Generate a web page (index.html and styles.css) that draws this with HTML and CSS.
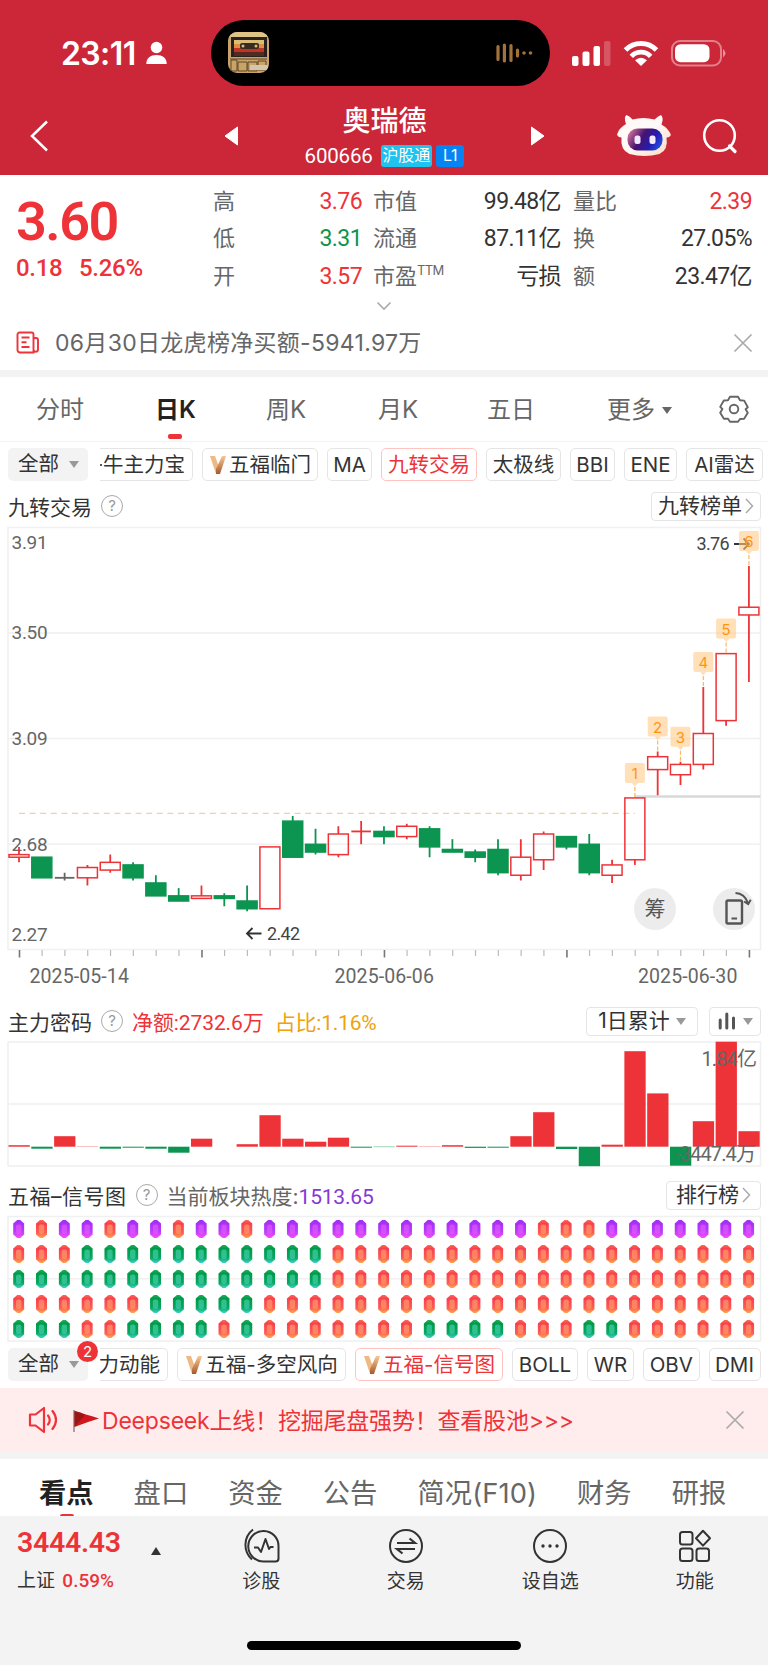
FILE: index.html
```
<!DOCTYPE html>
<html lang="zh-CN">
<head>
    <meta charset="UTF-8">
    <meta name="viewport" content="width=device-width, initial-scale=1.0">
    <title>奥瑞德 600666</title>
    <link rel="stylesheet" href="styles.css">
</head>
<body>

    <!-- 顶部 -->
    <header class="top">
        <div class="status-bar">
            <div class="clock">23:11</div>
            <svg class="person" width="22" height="24" viewBox="0 0 22 24"><circle cx="10.500" cy="6.500" r="5.800" fill="#fff"/><path d="M.3 23C.3 17 4.500 14 10.500 14s10.200 3 10.200 9z" fill="#fff"/></svg>
            <div class="island">
                <svg width="42" height="42" viewBox="0 0 42 42">
                    <defs><clipPath id="album"><rect width="41" height="41" rx="9"/></clipPath></defs>
                    <g clip-path="url(#album)">
                        <rect width="42" height="42" fill="#c9a468"/>
                        <rect width="42" height="5" fill="#e0c486"/>
                        <rect x="3" y="5" width="36" height="20" fill="#28211f"/>
                        <rect x="6" y="8" width="30" height="5" fill="#d9bd77"/>
                        <rect x="6" y="12" width="30" height="4" fill="#e18b45"/>
                        <rect x="6" y="16" width="30" height="4" fill="#bf3524"/>
                        <rect x="6" y="20" width="30" height="4" fill="#532a22"/>
                        <rect x="12" y="11" width="19" height="6" rx="2" fill="#392a23"/>
                        <circle cx="15" cy="14" r="1.500" fill="#d9bd77"/><circle cx="28" cy="14" r="1.500" fill="#d9bd77"/>
                        <path d="M2 27h37M3 28v11h6V28zM10 30h9v9h-9zM20 30h9v9h-9zM30 29h8v9h-8z" fill="none" stroke="#5f4728" stroke-width="1"/>
                        <rect x="22" y="33" width="18" height="5" fill="#d4c6ae"/>
                    </g>
                </svg>
                <svg width="37" height="20" viewBox="0 0 37 20"><path d="M2 3.500v13M8.400 2v16M15 2.500v15" stroke="#a2713c" stroke-width="3.200" stroke-linecap="round"/><path d="M21.500 7v6" stroke="#a2713c" stroke-width="3.200" stroke-linecap="round"/><circle cx="28" cy="10" r="1.800" fill="#a2713c"/><circle cx="34.500" cy="10" r="1.800" fill="#a2713c"/></svg>
            </div>
            <svg class="signal" width="39" height="25" viewBox="0 0 39 25"><rect y="15" width="6.500" height="10" rx="2" fill="#fff"/><rect x="10.500" y="10.500" width="7" height="14.500" rx="2" fill="#fff"/><rect x="21.500" y="5" width="6.500" height="20" rx="2" fill="#fff"/><rect x="32" width="6.500" height="25" rx="2" fill="#fff" opacity=".22"/></svg>
            <svg class="wifi" width="36" height="26" viewBox="0 0 36 26"><path d="M2.500 10a21.500 21.500 0 0 1 31 0" fill="none" stroke="#fff" stroke-width="5"/><path d="M8.300 16.300a13.500 13.500 0 0 1 19.400 0" fill="none" stroke="#fff" stroke-width="4.800"/><path d="M12 20.200q6-5 12 0l-6 5.800z" fill="#fff"/></svg>
            <svg class="battery" width="56" height="27" viewBox="0 0 56 27"><rect x="1" y="1" width="49" height="24.500" rx="8" fill="none" stroke="#fff" stroke-opacity=".42" stroke-width="2"/><rect x="4" y="4.200" width="34.500" height="18" rx="5.500" fill="#fff"/><path d="M52 9q5 4.300 0 8.600z" fill="#fff" opacity=".5"/></svg>
        </div>
        <div class="nav-bar">
            <svg class="back" width="20" height="32" viewBox="0 0 20 32"><path d="M17 1.500L2 16l15 14.500" fill="none" stroke="#fff" stroke-width="2.500"/></svg>
            <svg class="prev" width="15" height="20" viewBox="0 0 15 20"><path d="M1 10L13.500 1v18z" fill="#fff" stroke="#fff" stroke-linejoin="round"/></svg>
            <div class="stock">
                <h1>奥瑞德</h1>
                <div class="code"><span class="num">600666</span><b class="tag">沪股通</b><b class="tag blue">L1</b></div>
            </div>
            <svg class="next" width="15" height="20" viewBox="0 0 15 20"><path d="M14 10L1.500 1v18z" fill="#fff" stroke="#fff" stroke-linejoin="round"/></svg>
            <svg class="robot" width="56" height="44" viewBox="0 0 56 44">
                <defs>
                    <linearGradient id="face" x1="0" x2="1" y1=".2" y2=".6"><stop offset="0" stop-color="#d87599"/><stop offset=".42" stop-color="#461371"/><stop offset=".75" stop-color="#241cae"/><stop offset="1" stop-color="#214be4"/></linearGradient>
                    <linearGradient id="head" x1="0" x2="1" y1="0" y2="1"><stop offset=".5" stop-color="#fff9f7"/><stop offset="1" stop-color="#fbd9bf"/></linearGradient>
                </defs>
                <path d="M10 10Q7.500 3 10.500 1q3.500 1 6 4.500 11-3 22 0Q42 2 45 1q3 3 .5 9.500 7 4 9.500 10.500-2 3-4.500 2.500 2 12.500-7 16.500-15 4-30 0Q4 36 5.500 23.500q-3.500 0-4.500-3Q3 14 10 10z" fill="url(#head)"/>
                <rect x="11.500" y="14.500" width="35" height="22" rx="10" fill="url(#face)"/>
                <rect x="18.500" y="21.500" width="6" height="8.500" rx="2.500" fill="#f1eaff"/><rect x="33.500" y="21.500" width="6" height="8.500" rx="2.500" fill="#f1eaff"/>
            </svg>
            <svg class="search" width="36" height="36" viewBox="0 0 36 36"><circle cx="17.500" cy="17.500" r="15.300" fill="none" stroke="#fff" stroke-width="2.600"/><path d="M27.500 28l5.500 5.500" stroke="#fff" stroke-width="3.200" stroke-linecap="round"/></svg>
        </div>
    </header>

    <!-- 行情 -->
    <section class="quote">
        <div class="price">
            <div class="last num">3.60</div>
            <div class="change num"><span>0.18</span><span>5.26%</span></div>
        </div>
        <dl class="stat">
            <div><dt>高</dt><dd class="red">3.76</dd></div>
            <div><dt>低</dt><dd class="green">3.31</dd></div>
            <div><dt>开</dt><dd class="red">3.57</dd></div>
        </dl>
        <dl class="stat wide">
            <div><dt>市值</dt><dd>99.48亿</dd></div>
            <div><dt>流通</dt><dd>87.11亿</dd></div>
            <div><dt>市盈<sup>TTM</sup></dt><dd>亏损</dd></div>
        </dl>
        <dl class="stat last-col">
            <div><dt>量比</dt><dd class="red">2.39</dd></div>
            <div><dt>换</dt><dd>27.05%</dd></div>
            <div><dt>额</dt><dd>23.47亿</dd></div>
        </dl>
    </section>
    <div class="expand"><svg width="16" height="10" viewBox="0 0 16 10"><path d="M1.500 1.500L8 8l6.500-6.500" fill="none" stroke="#aaa" stroke-width="1.600"/></svg></div>

    <!-- 资讯 -->
    <div class="news">
        <svg width="24" height="23" viewBox="0 0 24 23"><path d="M17.500 21.500H4a2.500 2.500 0 0 1-2.500-2.500V3.500A2 2 0 0 1 3.500 1.500h12a2 2 0 0 1 2 2zM17.500 7h2.500a2 2 0 0 1 2 2v10a2.300 2.300 0 0 1-4.500 0M5.500 6.500h8M5.500 11.300h5M5.500 16h8" fill="none" stroke="#f0323a" stroke-width="1.900"/></svg>
        <span>06月30日龙虎榜净买额-5941.97万</span>
        <svg class="close" width="20" height="20" viewBox="0 0 20 20"><path d="M1.500 1.500l17 17M18.500 1.500l-17 17" stroke="#aaa" stroke-width="1.700"/></svg>
    </div>

    <!-- 周期 -->
    <nav class="period">
        <a class="p1">分时</a>
        <a class="p2 active">日K</a>
        <a class="p3">周K</a>
        <a class="p4">月K</a>
        <a class="p5">五日</a>
        <a class="p6">更多<i class="tri"></i></a>
        <svg width="30" height="28" viewBox="0 0 30 28"><path d="M11 1.700h8l2 3.600 4.200.3 3.600 6.600-2.200 2 2.200 3.600-3.700 6-4.100.2-2 2.700h-8l-2-2.900-4.100-.1-3.700-6L3.400 14l-2.200-2.100 3.600-6.400L9 5.300z" fill="none" stroke="#666" stroke-width="1.900" stroke-linejoin="round"/><circle cx="15" cy="14" r="4.300" fill="none" stroke="#666" stroke-width="1.900"/></svg>
    </nav>

    <!-- 主图指标 -->
    <div class="chips main-chips">
        <span class="all">全部<i class="tri"></i></span>
        <span class="chip cut w1"><em>牛主力宝</em></span>
        <span class="chip w2"><svg class="vip" width="18" height="20"><use href="#vip"/></svg>五福临门</span>
        <span class="chip w3">MA</span>
        <span class="chip on w4">九转交易</span>
        <span class="chip w5">太极线</span>
        <span class="chip w6">BBI</span>
        <span class="chip w7">ENE</span>
        <span class="chip w8">AI雷达</span>
    </div>

    <div class="panel-title first">
        <span>九转交易</span><i class="help">?</i>
        <span class="btn rank">九转榜单<svg width="9" height="16" viewBox="0 0 9 16"><path d="M1 1l6.500 7L1 15" fill="none" stroke="#aaa" stroke-width="1.500"/></svg></span>
    </div>

    <!-- K线图 -->
    <div class="kline">
        <svg id="kline" width="768" height="470" viewBox="0 5 768 470"></svg>
        <div class="round chou">筹</div>
        <div class="round rotate"><svg width="42" height="42" viewBox="0 0 42 42"><rect x="13.500" y="12.500" width="15.500" height="23" rx="1.500" fill="none" stroke="#555" stroke-width="2.400"/><path d="M18.500 30.500h5.500" stroke="#555" stroke-width="2"/><path d="M22.500 5q9 .5 12.500 10M31 13.500l4.200 2.700 2.500-4.500" fill="none" stroke="#555" stroke-width="2"/></svg></div>
    </div>

    <!-- 主力密码 -->
    <div class="panel-title second">
        <span>主力密码</span><i class="help">?</i>
        <span class="net">净额:2732.6万</span><span class="ratio">占比:1.16%</span>
        <span class="btn days">1日累计<i class="tri"></i></span>
        <span class="btn bars"><svg width="18" height="18" viewBox="0 0 18 18"><path d="M2.200 8v8M8.800 2v14M15.500 6v10" stroke="#555" stroke-width="3" stroke-linecap="round"/></svg><i class="tri"></i></span>
    </div>
    <svg id="flow" width="768" height="130" viewBox="0 0 768 130"></svg>

    <!-- 五福信号图 -->
    <div class="panel-title third">
        <span class="name">五福–信号图</span><i class="help">?</i>
        <span class="heat">当前板块热度:<b>1513.65</b></span>
        <span class="btn rank2">排行榜<svg width="9" height="16" viewBox="0 0 9 16"><path d="M1 1l6.500 7L1 15" fill="none" stroke="#aaa" stroke-width="1.500"/></svg></span>
    </div>
    <svg id="gems" width="768" height="130" viewBox="0 0 768 130">
        <defs>
            <linearGradient id="vg" x1="0" x2="0" y1="0" y2="1"><stop offset="0" stop-color="#f6c896"/><stop offset="1" stop-color="#a9592a"/></linearGradient>
            <linearGradient id="pg" x1="0" x2="0" y1="0" y2="1"><stop offset="0" stop-color="#a42bf5"/><stop offset=".6" stop-color="#b53cf8"/><stop offset="1" stop-color="#f94dfb"/></linearGradient>
            <linearGradient id="og" x1="0" x2="0" y1="0" y2="1"><stop offset="0" stop-color="#fb6a4e"/><stop offset=".2" stop-color="#f9404f"/><stop offset=".7" stop-color="#fb5b52"/><stop offset="1" stop-color="#ffa64d"/></linearGradient>
            <linearGradient id="gg" x1="0" x2="0" y1="0" y2="1"><stop offset="0" stop-color="#1fae5c"/><stop offset=".2" stop-color="#009a48"/><stop offset=".7" stop-color="#06a65d"/><stop offset="1" stop-color="#3fd3c9"/></linearGradient>
            <symbol id="vip" viewBox="0 0 18 20"><path d="M1 1h5l4 11-3 7z" fill="#eeb985"/><path d="M17 1h-4L7 14v5h4z" fill="url(#vg)"/></symbol>
            <symbol id="gem-p" viewBox="0 0 12 18"><path d="M4.500 0h3l4 3.500v11L7.500 18h-3l-4-3.500v-11z" fill="url(#pg)"/><rect x="3.300" y="4.500" width="5.400" height="9.500" rx="2" fill="#e95bfb" opacity=".6"/></symbol>
            <symbol id="gem-o" viewBox="0 0 12 18"><path d="M4.500 0h3l4 3.500v11L7.500 18h-3l-4-3.500v-11z" fill="url(#og)"/><rect x="3.300" y="4.500" width="5.400" height="9.500" rx="2" fill="#ff946b" opacity=".75"/></symbol>
            <symbol id="gem-g" viewBox="0 0 12 18"><path d="M4.500 0h3l4 3.500v11L7.500 18h-3l-4-3.500v-11z" fill="url(#gg)"/><rect x="3.300" y="4.500" width="5.400" height="9.500" rx="2" fill="#3fcba5" opacity=".75"/></symbol>
        </defs>
    </svg>

    <!-- 副图指标 -->
    <div class="chips sub-chips">
        <span class="all">全部<i class="tri"></i><b class="badge">2</b></span>
        <span class="chip cut s1"><em>力动能</em></span>
        <span class="chip s2"><svg class="vip" width="18" height="20"><use href="#vip"/></svg>五福-多空风向</span>
        <span class="chip on s3"><svg class="vip" width="18" height="20"><use href="#vip"/></svg>五福-信号图</span>
        <span class="chip s4">BOLL</span>
        <span class="chip s5">WR</span>
        <span class="chip s6">OBV</span>
        <span class="chip s7">DMI</span>
    </div>

    <!-- 公告条 -->
    <div class="notice">
        <svg width="32" height="28" viewBox="0 0 32 28"><path d="M2 8.500h5.500L16 2v24l-8.500-6.500H2z" fill="none" stroke="#f0323a" stroke-width="2.200" stroke-linejoin="round"/><path d="M20 9.500q3.500 4.500 0 9M24.500 5q7 9 0 18" fill="none" stroke="#f0323a" stroke-width="2.200" stroke-linecap="round"/></svg>
        <svg class="flag" width="27" height="24" viewBox="0 0 27 24"><path d="M1 1v22" stroke="#888" stroke-width="1.500"/><path d="M1.500 2Q12 5 26 9.500 14 13 1.500 18z" fill="#d0171b"/><path d="M1.500 2Q7 3 12 6L1.500 18z" fill="#98181a"/></svg>
        <span>Deepseek上线！挖掘尾盘强势！查看股池&gt;&gt;&gt;</span>
        <svg class="close" width="20" height="20" viewBox="0 0 20 20"><path d="M1.500 1.500l17 17M18.500 1.500l-17 17" stroke="#aaa" stroke-width="1.700"/></svg>
    </div>

    <nav class="info-tabs">
        <a class="active">看点</a><a>盘口</a><a>资金</a><a>公告</a><a class="f10">简况(F10)</a><a>财务</a><a>研报</a>
    </nav>

    <!-- 底部 -->
    <footer class="bottom">
        <div class="index">
            <div class="point num">3444.43</div>
            <div class="sh">上证 <b>0.59%</b></div>
        </div>
        <i class="up"></i>
        <div class="tool">
            <svg width="38" height="36" viewBox="0 0 38 36"><path d="M22 3a15 15 0 0 1 14.500 15v12.500a3 3 0 0 1-3 3H21.500A15.200 15.200 0 0 1 21.500 3zM11 1.500A19.500 19.500 0 0 0 10 31.500" fill="none" stroke="#333" stroke-width="2"/><path d="M12 19.500h4l3 4.500 4.500-13 3.500 10 1.500-2h3" fill="none" stroke="#333" stroke-width="2" stroke-linejoin="round"/></svg>
            <span>诊股</span>
        </div>
        <div class="tool">
            <svg width="36" height="36" viewBox="0 0 36 36"><circle cx="18" cy="18" r="16" fill="none" stroke="#333" stroke-width="2"/><path d="M9 15h18l-5.500-4.500M27 21H9l5.500 4.500" fill="none" stroke="#333" stroke-width="2.200"/></svg>
            <span>交易</span>
        </div>
        <div class="tool">
            <svg width="36" height="36" viewBox="0 0 36 36"><circle cx="18" cy="18" r="16" fill="none" stroke="#333" stroke-width="2"/><circle cx="11" cy="18" r="1.700" fill="#333"/><circle cx="18" cy="18" r="1.700" fill="#333"/><circle cx="25" cy="18" r="1.700" fill="#333"/></svg>
            <span>设自选</span>
        </div>
        <div class="tool">
            <svg width="34" height="36" viewBox="0 0 34 36"><g fill="none" stroke="#333" stroke-width="2"><rect x="2" y="4" width="12.500" height="12.500" rx="2.500"/><rect x="2" y="20.500" width="12.500" height="12.500" rx="2.500"/><rect x="18.500" y="20.500" width="12.500" height="12.500" rx="2.500"/><path d="M25 2.800l7 7.400-7 7.400-7-7.400z" stroke-linejoin="round"/></g></svg>
            <span>功能</span>
        </div>
        <div class="home"></div>
    </footer>

    <script>
        const RED = '#ee3338';
        const GREEN = '#0b9550';
        const STEP = 22.81;
        const cx = i => 19 + i * STEP;

        // K线数据：最高, 实体上沿, 实体下沿, 最低, 颜色
        const candles = [
            [2.67, 2.64, 2.63, 2.61, 'r'], [2.63, 2.63, 2.55, 2.55, 'g'], [2.57, 2.55, 2.55, 2.54, 'x'],
            [2.60, 2.59, 2.55, 2.52, 'r'], [2.64, 2.61, 2.58, 2.57, 'r'], [2.61, 2.60, 2.55, 2.54, 'g'],
            [2.56, 2.53, 2.48, 2.48, 'g'], [2.51, 2.48, 2.46, 2.46, 'g'], [2.52, 2.48, 2.47, 2.47, 'r'],
            [2.49, 2.48, 2.47, 2.44, 'g'], [2.52, 2.46, 2.43, 2.42, 'g'], [2.67, 2.67, 2.43, 2.43, 'r'],
            [2.79, 2.77, 2.63, 2.63, 'g'], [2.74, 2.68, 2.65, 2.64, 'g'], [2.75, 2.72, 2.64, 2.63, 'r'],
            [2.77, 2.73, 2.73, 2.68, 'r'], [2.75, 2.73, 2.71, 2.68, 'g'], [2.76, 2.75, 2.71, 2.70, 'r'],
            [2.75, 2.74, 2.67, 2.63, 'g'], [2.70, 2.66, 2.65, 2.65, 'g'], [2.66, 2.65, 2.63, 2.61, 'g'],
            [2.70, 2.66, 2.57, 2.56, 'g'], [2.70, 2.63, 2.56, 2.54, 'r'], [2.73, 2.72, 2.62, 2.58, 'r'],
            [2.71, 2.71, 2.67, 2.66, 'g'], [2.72, 2.68, 2.57, 2.56, 'g'], [2.62, 2.60, 2.56, 2.53, 'r'],
            [2.86, 2.86, 2.62, 2.60, 'r'], [3.04, 3.02, 2.97, 2.87, 'r'], [3.00, 2.99, 2.95, 2.91, 'r'],
            [3.29, 3.11, 2.99, 2.97, 'r'], [3.42, 3.42, 3.16, 3.14, 'r'], [3.76, 3.60, 3.57, 3.31, 'r']
        ];
        const y = p => 113 + (3.5 - p) * 257.7;
        let k = '<path d="M8 7.500h752.500v422H8zM8 113h752M8 218.500h752M8 324.300h752" fill="none" stroke="#f0f0f0" stroke-width="1.500"/>';
        k += '<path d="M19 293.400h616" stroke="#fbcf8e" stroke-width="1.300" stroke-dasharray="6 4.600"/>';
        k += '<path d="M635 276.500h125.500" stroke="#d9d9d9" stroke-width="2.500"/>';
        k += '<g class="axis"><text x="11.500" y="28.500">3.91</text><text x="11.500" y="119">3.50</text><text x="11.500" y="224.500">3.09</text><text x="11.500" y="330.500">2.68</text><text x="11.500" y="421">2.27</text>';
        k += '<text class="date" x="29.500" y="463">2025-05-14</text><text class="date" x="334.500" y="463">2025-06-06</text><text class="date" x="638" y="463">2025-06-30</text></g>';
        k += '<g class="mark"><text x="267" y="419.500">2.42</text><text x="696.500" y="30">3.76</text></g>';
        k += '<path d="M261.500 413.500H247M252.500 408l-5.500 5.500 5.500 5.500M734 24h15M743.500 18.500l5.500 5.500-5.500 5.500" fill="none" stroke="#333" stroke-width="1.800"/>';
        candles.forEach(([hi, top, bot, lo, type], i) => {
            const x = cx(i);
            const color = type === 'r' ? RED : type === 'g' ? GREEN : '#666';
            k += `<path d="M${x} ${y(hi)}V${y(top)}M${x} ${y(bot)}V${y(lo)}" stroke="${color}" stroke-width="1.800"/>`;
            if (top === bot) {
                k += `<path d="M${x - 9.800} ${y(top)}h19.600" stroke="${color}" stroke-width="1.800"/>`;
            } else {
                k += `<rect x="${x - 10}" y="${y(top)}" width="20" height="${y(bot) - y(top)}" fill="${type === 'g' ? GREEN : 'none'}" stroke="${color}" stroke-width="1.500"/>`;
            }
            // 大小刻度
            k += i % 8 === 0 ? `<path d="M${x + .5} 430v7.500" stroke="#777" stroke-width="1.600"/>` : `<path d="M${x + .3} 430v6" stroke="#bbb" stroke-width="1.200"/>`;
            // 九转序号
            if (i > 26) {
                const t = y(hi) - 35;
                k += `<path d="M${x} ${t + 24}V${y(hi)}" stroke="#f8b95d" stroke-width="1.200" stroke-dasharray="4 2"/>`;
                k += `<path d="M${x - 8} ${t}h16a2 2 0 0 1 2 2v16a2 2 0 0 1-2 2h-5l-3 3.500-3-3.500h-5a2 2 0 0 1-2-2v-16a2 2 0 0 1 2-2z" fill="#ffcb88" fill-opacity=".6"/>`;
                k += `<text class="nine" x="${x}" y="${t + 16}">${i - 26}</text>`;
            }
        });
        document.getElementById('kline').innerHTML = k;

        // 主力资金柱
        const flow = [1.5, -2, 10.5, .3, -2, -1, -2, -6, 8, 0, 2.5, 31.5, 8, 5, 9, -1, -.4, 1, .3, 1.5, -1.2, -1, 10.5, 34.5, -2.3, -19.5, 2, 95.5, 53.3, -19, 25.5, 105, 15.5];
        let f = '<path d="M8 2h752.500v124H8zM8 64h752" fill="none" stroke="#f0f0f0" stroke-width="1.500"/>';
        flow.forEach((v, i) => {
            f += `<rect x="${cx(i) - 10.500}" y="${v > 0 ? 106.700 - v : 106.700}" width="21.300" height="${Math.abs(v)}" fill="${v > 0 ? RED : GREEN}"/>`;
        });
        f += '<text x="756" y="26" text-anchor="end">1.84亿</text><text x="755" y="121" text-anchor="end">-3447.4万</text>';
        document.getElementById('flow').innerHTML = f;

        // 信号图：p 紫, o 橙, g 绿
        const rows = [
            'poppoppoppoppppppppppppooopppppppp'.slice(0, 33),
            'oooggggggggggg' + 'o'.repeat(19),
            'gggggggggggggg' + 'o'.repeat(19),
            'ooooooggggg' + 'o'.repeat(22),
            'gggooggggogooooooogggg' + 'oooggoooooo'
        ];
        let g = '<path d="M8 1.500h752.500v124.500H8zM8 63.700h752" fill="none" stroke="#f0f0f0" stroke-width="1.500"/>';
        rows.forEach((row, r) => {
            [...row].forEach((c, i) => {
                g += `<use href="#gem-${c}" x="${cx(i) - 6.300}" y="${5 + r * 25}" width="12" height="18"/>`;
            });
        });
        document.getElementById('gems').insertAdjacentHTML('beforeend', g);
    </script>

</body>
</html>
```

FILE: styles.css
```
/* 基础 */
* {
    box-sizing: border-box;
}
body {
    margin: 0;
    width: 768px;
    height: 1665px;
    overflow: hidden;
    background: #fff;
    color: #333;
    font-family: Inter, "Noto Sans CJK SC", sans-serif;
    display: flex;
    flex-direction: column;
}
body > * {
    flex-shrink: 0;
}
svg {
    display: block;
    flex-shrink: 0;
}
i, em {
    font-style: normal;
}
.num {
    font-family: Roboto, "Noto Sans CJK SC", sans-serif;
}
.red {
    color: #ee3338;
}
.green {
    color: #0b9550;
}

/* 顶部 */
.top {
    height: 175px;
    background: #cb2738;
    color: #fff;
}
.status-bar {
    display: flex;
    align-items: center;
    height: 106px;
    padding-left: 61px;
}
.clock {
    width: 85px;
    font-size: 32px;
    font-weight: 600;
    letter-spacing: -.6px;
    white-space: nowrap;
}
.island {
    display: flex;
    align-items: center;
    justify-content: space-between;
    width: 339px;
    height: 66px;
    margin-left: 43px;
    padding: 0 17px;
    border-radius: 33px;
    background: #000;
}
.signal {
    margin-left: 22px;
}
.wifi {
    margin-left: 12px;
}
.battery {
    margin-left: 12px;
}
.nav-bar {
    display: flex;
    align-items: center;
    height: 60px;
    padding-left: 30px;
}
.prev {
    margin-left: 174px;
}
.stock {
    width: 291px;
    text-align: center;
}
.stock h1 {
    margin: 0;
    font-size: 28px;
    font-weight: 500;
    line-height: 30px;
    padding-bottom: 7px;
}
.code {
    display: flex;
    align-items: center;
    justify-content: center;
    height: 24px;
    font-size: 20.500px;
    letter-spacing: -.2px;
    padding-top: 2px;
}
.tag {
    height: 22px;
    margin-left: 8px;
    padding: 0 2px;
    border-radius: 3px;
    background: #1fc3ee;
    font-size: 16px;
    font-weight: 400;
    line-height: 21px;
}
.tag.blue {
    margin-left: 4px;
    padding: 0 7px;
    background: #0584f2;
}
.robot {
    margin-left: 71px;
}
.search {
    margin-left: 30px;
}

/* 行情 */
.quote {
    display: flex;
    height: 119px;
    padding: 8px 0 0 16px;
}
.price {
    width: 197px;
    color: #ee3338;
    font-weight: 700;
}
.last {
    padding-top: 10px;
    font-size: 54px;
    font-weight: 600;
    line-height: 57px;
    letter-spacing: -1.500px;
}
.change {
    padding-top: 4px;
    font-size: 24px;
    font-weight: 500;
    line-height: 28px;
    letter-spacing: -.3px;
}
.change span {
    display: inline-block;
    width: 63px;
}
.stat {
    width: 149px;
    margin: 0;
    font-size: 22px;
}
.stat.wide {
    width: 188px;
    margin-left: 11px;
}
.stat.last-col {
    width: 179px;
    margin-left: 12px;
}
.stat div {
    display: flex;
    justify-content: space-between;
    height: 37.400px;
    line-height: 37px;
}
.stat dt {
    color: #666;
    white-space: nowrap;
}
.stat dd {
    margin: 0;
    font-family: Roboto, "Noto Sans CJK SC", sans-serif;
    font-size: 23px;
    letter-spacing: -.6px;
    white-space: nowrap;
}
sup {
    font-size: 13px;
    letter-spacing: -.7px;
    line-height: 1;
    vertical-align: 9px;
}
.expand {
    display: flex;
    justify-content: center;
    height: 24px;
    padding-top: 7px;
}

/* 资讯 */
.news {
    display: flex;
    align-items: center;
    height: 52px;
    padding: 0 15px 3px 16px;
    color: #666;
    font-size: 23px;
}
.news span {
    margin: -4px 0 0 15px;
    letter-spacing: .3px;
}
.close {
    margin-left: auto;
}

/* 周期 */
.period {
    display: flex;
    height: 72px;
    border-top: 7px solid #f3f3f3;
    border-bottom: 1px solid #f3f3f3;
    padding-left: 36px;
    font-size: 24px;
    line-height: 66px;
    color: #666;
}
.p1 { width: 119px; }
.p2 { width: 111px; }
.p3 { width: 112px; }
.p4 { width: 109px; }
.p5 { width: 120px; }
.p6 { width: 112px; }
.period a {
    position: relative;
}
.period svg {
    margin-top: 18px;
}
.period .active {
    color: #222;
    font-weight: 600;
}
.period .active::after {
    content: "";
    position: absolute;
    left: 13px;
    bottom: 2px;
    width: 14px;
    height: 5px;
    border-radius: 2px;
    background: #ee3338;
}
.tri {
    display: inline-block;
    border: 5px solid transparent;
    border-top: 7px solid #999;
    border-bottom: 0;
}
.p6 .tri {
    margin: 0 0 4px 7px;
    border-top-color: #666;
}

/* 指标标签 */
.chips {
    display: flex;
    gap: 9px;
    height: 33px;
    font-size: 20.500px;
    line-height: 30px;
}
.main-chips {
    padding-left: 7px;
    margin-top: 6px;
}
.all {
    position: relative;
    width: 80px;
    margin-left: 1px;
    margin-right: 3px;
    padding: 1px 0 0 10px;
    border-radius: 5px;
    background: #f3f3f3;
}
.all .tri {
    margin: 0 0 3px 10px;
}
.chip {
    display: flex;
    align-items: center;
    justify-content: center;
    height: 33px;
    border: 1.500px solid #e5e5e5;
    border-radius: 5px;
    white-space: nowrap;
}
.chip.cut {
    justify-content: flex-end;
    padding-right: 7px;
    border-left: 0;
    border-radius: 0 5px 5px 0;
    overflow: hidden;
}
.chip.on {
    border-color: #ffc4bf;
    color: #ee3338;
}
.vip {
    margin-right: 2px;
}
.w1 { width: 93px; }
/* 左侧文字被裁掉的一截 */
.w1::before {
    content: "";
    width: 3px;
    height: 2px;
    margin-right: 1px;
    background: #555;
}
.w2 { width: 116px; }
.w3 { width: 45px; }
.w4 { width: 96px; }
.w5 { width: 75px; }
.w6 { width: 45px; }
.w7 { width: 53px; }
.w8 { width: 77px; }

/* 图表标题 */
.panel-title {
    display: flex;
    align-items: center;
    padding: 0 7px 0 8px;
    font-size: 21px;
    white-space: nowrap;
}
.panel-title.first {
    height: 44px;
    padding-top: 9px;
    padding-bottom: 3px;
}
.panel-title.second {
    height: 45px;
    padding-bottom: 1px;
    padding-top: 8px;
}
.panel-title.third {
    height: 45px;
    padding-bottom: 3px;
    padding-top: 8px;
}
.name {
    letter-spacing: .5px;
}
.help {
    width: 22px;
    height: 22px;
    margin-left: 9px;
    border: 1.500px solid #aaa;
    border-radius: 50%;
    color: #999;
    font-size: 15px;
    line-height: 20px;
    text-align: center;
}
.btn {
    display: flex;
    align-items: center;
    justify-content: center;
    height: 29px;
    margin-left: auto;
    border: 1.500px solid #e5e5e5;
    border-radius: 4px;
    line-height: 26px;
}
.rank {
    width: 110px;
}
.rank2 {
    width: 95px;
}
.rank2 svg, .rank svg {
    margin-left: 3px;
}
.net, .ratio {
    margin-left: 9px;
    color: #ee3338;
    font-family: Roboto, "Noto Sans CJK SC", sans-serif;
    letter-spacing: -.1px;
}
.ratio {
    margin-left: 11px;
    color: #eea20b;
    letter-spacing: -.2px;
}
.days {
    width: 112px;
}
.days .tri {
    margin-left: 6px;
}
.bars {
    width: 52px;
    margin-left: 11px;
}
.bars .tri {
    margin-left: 7px;
}
.heat {
    margin-left: 9px;
    color: #666;
}
.heat b {
    color: #8736d8;
    font-family: Roboto, sans-serif;
    font-weight: 400;
    letter-spacing: -.2px;
}

/* K线图 */
.kline {
    position: relative;
    height: 470px;
}
.round {
    position: absolute;
    top: 363px;
    width: 42px;
    height: 42px;
    border-radius: 50%;
    background: #ececec;
    color: #555;
    font-size: 21px;
    line-height: 41px;
    text-align: center;
}
.chou {
    left: 634px;
}
.rotate {
    left: 713px;
}
svg text {
    font-family: Roboto, "Noto Sans CJK SC", sans-serif;
    font-size: 19px;
    letter-spacing: -.3px;
    fill: #666;
}
svg .date {
    font-size: 19.500px;
    letter-spacing: .1px;
}
.mark text {
    font-size: 18px;
    letter-spacing: -.7px;
    fill: #444;
}
svg .nine {
    font-family: Inter, sans-serif;
    font-size: 15px;
    letter-spacing: 0;
    fill: #ff9412;
    text-anchor: middle;
}
#flow text {
    font-size: 20px;
    letter-spacing: -.9px;
}

/* 副图指标 */
.sub-chips {
    padding-left: 7px;
    margin-top: 3px;
}
.badge {
    position: absolute;
    right: -10px;
    top: -7px;
    width: 21px;
    height: 21px;
    border-radius: 50%;
    background: #ee3338;
    color: #fff;
    font-size: 15px;
    font-weight: 400;
    line-height: 21px;
    text-align: center;
}
.s1 { width: 68px; }
.s2 { width: 169px; }
.s3 { width: 148px; }
.s4 { width: 66px; }
.s5 { width: 47px; }
.s6 { width: 56.500px; }
.s7 { width: 52px; }

/* 公告条 */
.notice {
    display: flex;
    align-items: center;
    height: 71px;
    margin-top: 7px;
    padding: 0 23px 0 28px;
    border-bottom: 7px solid #f3f3f3;
    background: #ffeded;
    color: #ee3338;
    font-size: 23px;
    letter-spacing: -.2px;
    white-space: nowrap;
}
.notice span {
    margin-top: -3px;
}
.flag {
    margin: 1px 2px 0 13px;
}

/* 资讯标签 */
.info-tabs {
    display: flex;
    gap: 40px;
    height: 57px;
    padding-left: 39px;
    color: #666;
    font-size: 27.300px;
    line-height: 69px;
    white-space: nowrap;
    overflow: hidden;
}
.info-tabs a {
    position: relative;
}
.info-tabs .active {
    color: #222;
    font-weight: 700;
}
.info-tabs .active::after {
    content: "";
    position: absolute;
    left: 21px;
    top: 55px;
    width: 14px;
    height: 5px;
    border-radius: 2px;
    background: #ee3338;
}
.f10 {
    letter-spacing: .1px;
}

/* 底部 */
.bottom {
    position: relative;
    display: flex;
    height: 149px;
    padding-left: 17px;
    background: #f3f3f3;
}
.index {
    width: 134px;
    padding-top: 10px;
}
.point {
    color: #ee3338;
    font-size: 28.500px;
    font-weight: 600;
    line-height: 33px;
    letter-spacing: -.3px;
}
.sh {
    padding-top: 8px;
    font-size: 19px;
    line-height: 28px;
    white-space: nowrap;
}
.sh b {
    margin-left: 2px;
    color: #ee3338;
    font-family: Roboto, sans-serif;
    font-weight: 500;
}
.up {
    width: 0;
    height: 0;
    margin-top: 31px;
    border: 5.500px solid transparent;
    border-top: 0;
    border-bottom: 8px solid #333;
}
.tool {
    display: flex;
    flex-direction: column;
    align-items: center;
    width: 144.500px;
    padding-top: 12px;
    font-size: 19px;
    line-height: 28px;
}
.tool span {
    padding-top: 4px;
}
.up + .tool {
    margin-left: 28px;
}
.home {
    position: absolute;
    left: 247px;
    bottom: 15px;
    width: 274px;
    height: 9px;
    border-radius: 5px;
    background: #000;
}
```
